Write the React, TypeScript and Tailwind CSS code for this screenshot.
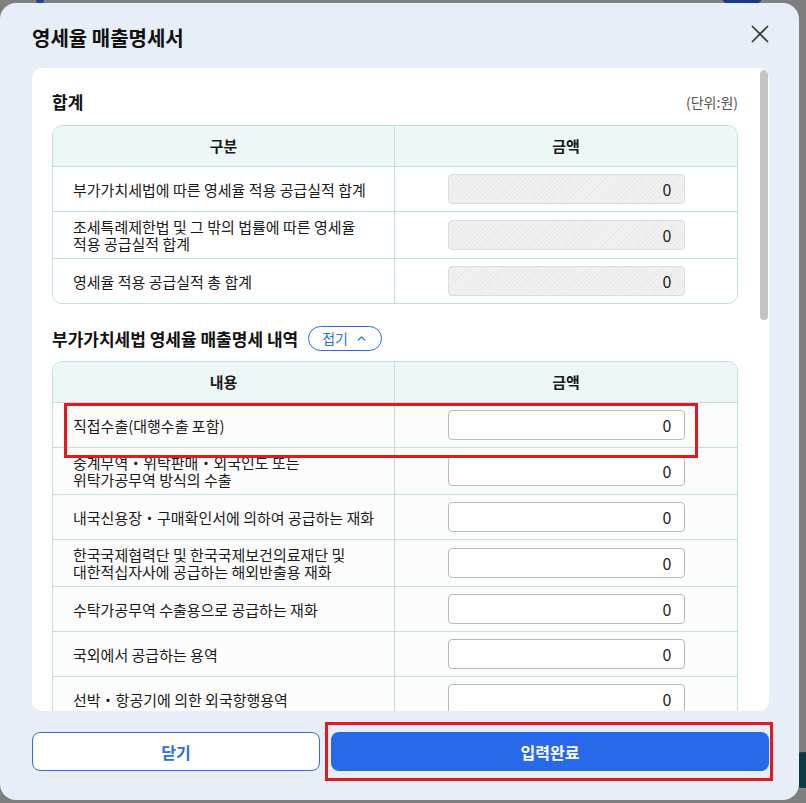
import { ChevronUp } from "lucide-react";

const totals = [
  { label: "부가가치세법에 따른 영세율 적용 공급실적 합계", lines: 1 },
  { label: "조세특례제한법 및 그 밖의 법률에 따른 영세율\n적용 공급실적 합계", lines: 2 },
  { label: "영세율 적용 공급실적 총 합계", lines: 1 },
];

const details = [
  "직접수출(대행수출 포함)",
  "중계무역・위탁판매・외국인도 또는\n위탁가공무역 방식의 수출",
  "내국신용장・구매확인서에 의하여 공급하는 재화",
  "한국국제협력단 및 한국국제보건의료재단 및\n대한적십자사에 공급하는 해외반출용 재화",
  "수탁가공무역 수출용으로 공급하는 재화",
  "국외에서 공급하는 용역",
  "선박・항공기에 의한 외국항행용역",
  "국제복합운송계약에 의한 외국항행용역",
];

function AmountInput({ disabled }: { disabled?: boolean }) {
  return (
    <div
      className={
        disabled
          ? "w-[237px] h-[30px] rounded-[4px] border border-[#dddddd] bg-[repeating-linear-gradient(135deg,#f1f1f1_0px,#f1f1f1_2px,#e9e9e9_2px,#e9e9e9_3px)] flex items-center justify-end pr-3 text-[16px] text-[#222]"
          : "w-[237px] h-[30px] rounded-[4px] border border-[#b9b9b9] bg-white flex items-center justify-end pr-3 text-[16px] text-[#222]"
      }
    >
      0
    </div>
  );
}

function Row({ label, disabled, tinted }: { label: string; disabled?: boolean; tinted?: boolean }) {
  return (
    <div className={`flex border-t border-[#bfdfe2] min-h-[45px] ${tinted ? "bg-[#fcfcfc]" : "bg-white"}`}>
      <div className="w-1/2 border-r border-[#bfdfe2] flex items-center pl-5 pr-3 py-[6px] text-[15px] leading-[17px] text-[#1a1a1a] whitespace-pre-line">
        {label}
      </div>
      <div className="w-1/2 flex items-center justify-center py-[6px]">
        <AmountInput disabled={disabled} />
      </div>
    </div>
  );
}

function TableHead({ left }: { left: string }) {
  return (
    <div className="flex h-10 bg-[#eef7f7] text-[15px] font-bold text-[#1a1a1a]">
      <div className="w-1/2 border-r border-[#bfdfe2] flex items-center justify-center">{left}</div>
      <div className="w-1/2 flex items-center justify-center">금액</div>
    </div>
  );
}

export default function App() {
  return (
    <div className="relative w-[806px] h-[803px] bg-[#7f7f7f] overflow-hidden font-['Noto_Sans_CJK_KR',sans-serif]">
      {/* bits of the page behind the dialog */}
      <div className="absolute left-[36px] top-[-6px] w-[8px] h-[10px] rounded-full bg-[#23458f]" />
      <div className="absolute left-[722px] top-[-10px] w-[40px] h-[14px] rounded-full bg-[#163a86]" />
      <div className="absolute left-[786px] top-[752px] w-[36px] h-[36px] rounded-full bg-[#0e3a48]" />

      <div className="relative mt-[3px] w-[799px] h-[797px] rounded-2xl bg-[#e7eef8] flex flex-col pl-8 pr-[30px]">
        <div className="h-[65px] flex items-start justify-between">
          <h1 className="mt-[21px] text-[20px] leading-7 font-bold text-[#111]">영세율 매출명세서</h1>
          <button className="mt-[20px] mr-[-2px] w-[22px] h-[22px] flex items-center justify-center text-[#333]">
            <svg width="18" height="18" viewBox="0 0 18 18" fill="none" stroke="currentColor" strokeWidth="1.6">
              <path d="M1 1L17 17M17 1L1 17" />
            </svg>
          </button>
        </div>

        <div className="relative h-[643px] rounded-[10px] bg-white overflow-hidden">
          <div className="pl-5 pr-[31px] pt-6">
            <div className="flex items-center justify-between h-5">
              <h2 className="text-[17px] font-bold text-[#111]">합계</h2>
              <span className="text-[14px] text-[#555]">(단위:원)</span>
            </div>

            <div className="mt-[13px] rounded-[10px] border border-[#bfdfe2] overflow-hidden">
              <TableHead left="구분" />
              {totals.map((t) => (
                <Row key={t.label} label={t.label} disabled />
              ))}
            </div>

            <div className="mt-[22px] flex items-center gap-[10px] h-[25px]">
              <h2 className="text-[17px] font-bold text-[#111]">부가가치세법 영세율 매출명세 내역</h2>
              <button className="h-[25px] px-[13px] rounded-full border border-[#2b6de8] bg-white flex items-center gap-[7px] text-[14px] text-[#2b6de8]">
                접기
                <ChevronUp size={13} strokeWidth={2.5} />
              </button>
            </div>

            <div className="mt-[10px] rounded-t-[10px] border border-[#bfdfe2] overflow-hidden">
              <TableHead left="내용" />
              {details.map((d) => (
                <Row key={d} label={d} tinted />
              ))}
            </div>
          </div>

          {/* scrollbar thumb */}
          <div className="absolute right-px top-[2px] w-[8px] h-[250px] rounded-full bg-[#c4c4c4]" />
        </div>

        <div className="pt-[21px] flex gap-[11px]">
          <button className="w-[288px] h-[39px] rounded-lg border border-[#2b6de8] bg-white text-[16px] font-bold text-[#2b6de8]">
            닫기
          </button>
          <button className="flex-1 h-[39px] rounded-lg bg-[#2769e9] text-[16px] font-bold text-white">
            입력완료
          </button>
        </div>
      </div>

      {/* annotation boxes */}
      <div className="absolute left-[64px] top-[403px] w-[634px] h-[55px] border-[3px] border-[#e3191f] pointer-events-none" />
      <div className="absolute left-[325px] top-[722px] w-[448px] h-[59px] border-[3px] border-[#e3191f] pointer-events-none" />
    </div>
  );
}
